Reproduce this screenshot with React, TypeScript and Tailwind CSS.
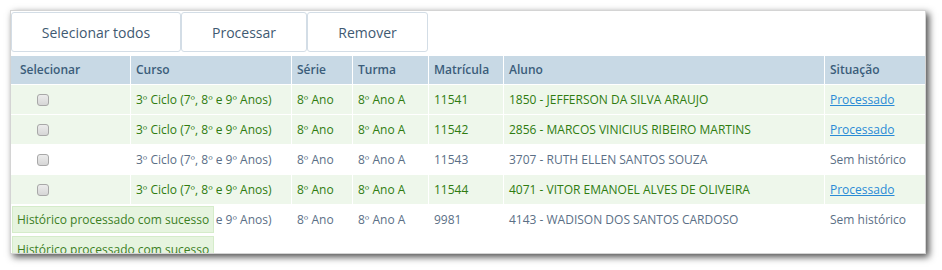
import React from 'react';

type Row = {
  curso: string;
  serie: string;
  turma: string;
  matricula: string;
  aluno: string;
  processado: boolean;
};

const rows: Row[] = [
  { curso: '3º Ciclo (7º, 8º e 9º Anos)', serie: '8º Ano', turma: '8º Ano A', matricula: '11541', aluno: '1850 - JEFFERSON DA SILVA ARAUJO', processado: true },
  { curso: '3º Ciclo (7º, 8º e 9º Anos)', serie: '8º Ano', turma: '8º Ano A', matricula: '11542', aluno: '2856 - MARCOS VINICIUS RIBEIRO MARTINS', processado: true },
  { curso: '3º Ciclo (7º, 8º e 9º Anos)', serie: '8º Ano', turma: '8º Ano A', matricula: '11543', aluno: '3707 - RUTH ELLEN SANTOS SOUZA', processado: false },
  { curso: '3º Ciclo (7º, 8º e 9º Anos)', serie: '8º Ano', turma: '8º Ano A', matricula: '11544', aluno: '4071 - VITOR EMANOEL ALVES DE OLIVEIRA', processado: true },
  { curso: '3º Ciclo (7º, 8º e 9º Anos)', serie: '8º Ano', turma: '8º Ano A', matricula: '9981', aluno: '4143 - WADISON DOS SANTOS CARDOSO', processado: false },
];

const cols = 'grid grid-cols-[119px_160px_60px_75px_74px_320px_101px] gap-x-px';

function Checkbox() {
  return (
    <span className="block h-[12px] w-[12px] rounded-[3px] border border-[#a8a8a8] bg-gradient-to-b from-[#ececec] to-[#d6d6d6]" />
  );
}

export default function App() {
  return (
    <div className="h-[270px] w-[942px] bg-white pl-[10px] pt-[10px] font-['Open_Sans',sans-serif] text-[12px]">
      <div className="relative h-[244px] w-[916px] overflow-hidden border border-[#d4d4d4] bg-white shadow-[3px_3px_7px_rgba(0,0,0,0.7)]">
        <div className="flex h-[41px] pt-px">
          {[
            ['Selecionar todos', 'w-[170px]'],
            ['Processar', 'w-[126px]'],
            ['Remover', 'w-[121px]'],
          ].map(([label, w]) => (
            <button
              key={label}
              className={`${w} h-[40px] rounded-[3px] border border-[#d3dde6] bg-white text-[14px] text-[#3f5a72]`}
            >
              {label}
            </button>
          ))}
        </div>

        <div className="mt-[4px] flex flex-col gap-y-px">
          <div className={`${cols} h-[28px] bg-white font-semibold text-[#3b5d7a]`}>
            {['Selecionar', 'Curso', 'Série', 'Turma', 'Matrícula', 'Aluno', 'Situação'].map((h, i) => (
              <div key={h} className={`flex items-center bg-[#c8d9e5] ${i === 0 ? 'pl-[9px]' : 'pl-[5px]'}`}>
                {h}
              </div>
            ))}
          </div>

          {rows.map((r) => {
            const cell = `flex items-center pl-[5px] ${r.processado ? 'bg-[#eef7eb] text-[#2f7c10]' : 'bg-white text-[#5b6f86]'}`;
            return (
              <div key={r.matricula} className={`${cols} h-[29px]`}>
                <div className={`${cell} pl-[26px]`}>
                  <Checkbox />
                </div>
                <div className={cell}>{r.curso}</div>
                <div className={cell}>{r.serie}</div>
                <div className={cell}>{r.turma}</div>
                <div className={cell}>{r.matricula}</div>
                <div className={cell}>{r.aluno}</div>
                <div className={cell}>
                  {r.processado ? (
                    <a href="#" className="text-[#2a8bd6] underline">
                      Processado
                    </a>
                  ) : (
                    <span className="text-[#5b6f86]">Sem histórico</span>
                  )}
                </div>
              </div>
            );
          })}
        </div>

        <div className="absolute left-px top-[195px] flex flex-col gap-[3px]">
          {[0, 1].map((k) => (
            <div
              key={k}
              className="flex h-[27px] w-[202px] items-center border border-[#d5ecca] bg-[#e6f4df] pl-[4px] text-[#3c7f1f]"
            >
              Histórico processado com sucesso
            </div>
          ))}
        </div>
      </div>
    </div>
  );
}
